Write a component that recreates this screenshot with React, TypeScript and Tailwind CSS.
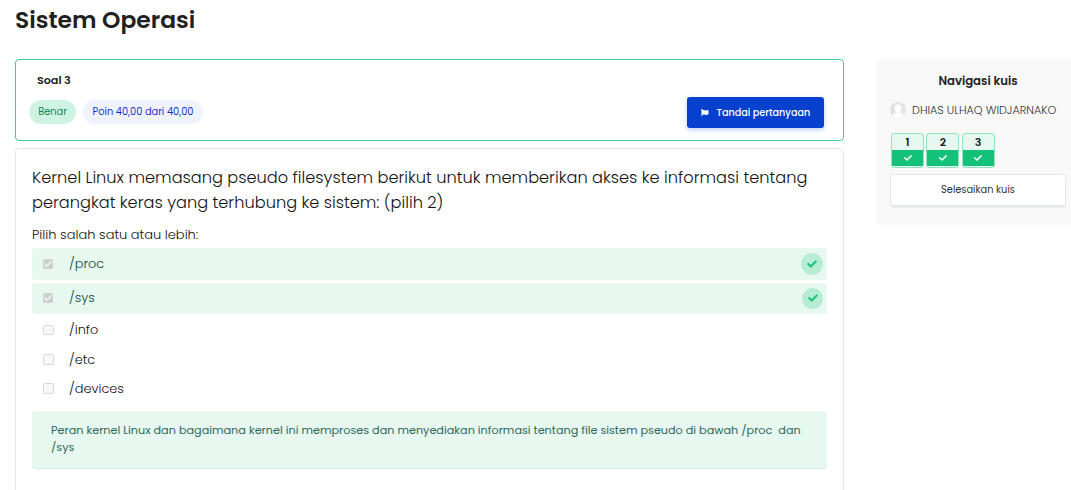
import { FaCheck, FaFlag } from "react-icons/fa";

const options = [
  { label: "/proc", correct: true, row: "h-8 mb-[3px]", badge: "size-[22px]" },
  { label: "/sys", correct: true, row: "h-[31px] mb-[1px] pb-px", badge: "size-[21px]" },
  { label: "/info", correct: false, row: "h-[30px]", badge: "" },
  { label: "/etc", correct: false, row: "h-[29px]", badge: "" },
  { label: "/devices", correct: false, row: "h-[29px]", badge: "" },
];

function Checkbox({ checked }: { checked: boolean }) {
  return checked ? (
    <span className="flex size-[10px] items-center justify-center rounded-[2px] bg-[#cbcfcd] text-[#f0f5f3]">
      <FaCheck size={8} />
    </span>
  ) : (
    <span className="size-[10.5px] rounded-[2px] border border-[#d9d9d9] bg-[#f8f8f8]" />
  );
}

function QuestionInfo() {
  return (
    <section className="flex h-[82px] justify-between rounded border border-[#3fce92] pl-[13px] pr-[19px]">
      <div>
        <h2 className="mt-[11px] pl-2 text-[11.2px] leading-[18px] font-semibold tracking-[-0.05px]">Soal 3</h2>
        <div className="mt-[11px] flex gap-[7px] text-[9.8px] leading-6">
          <span className="w-[47px] rounded-full bg-[#cff3e3] text-center text-[#198754]">Benar</span>
          <span className="w-[120px] rounded-full bg-[#eff3fe] text-center text-[#1233c8]">Poin 40,00 dari 40,00</span>
        </div>
      </div>
      <button className="mt-[37px] flex h-[31px] w-[137px] items-center rounded-[3px] bg-[#0540cf] pl-[14px] text-[9.65px] font-medium text-white shadow-[0_2px_5px_rgba(5,64,207,0.25)]">
        <FaFlag size={7.5} />
        <span className="ml-[8px] pt-px whitespace-nowrap">Tandai pertanyaan</span>
      </button>
    </section>
  );
}

function Question() {
  return (
    <section className="mt-[7px] h-[360px] rounded border border-[#e6e6e6] px-4 pt-4">
      <p className="whitespace-nowrap text-[16.21px] leading-[25px] font-light text-[#111]">
        Kernel Linux memasang pseudo filesystem berikut untuk memberikan akses ke informasi tentang
        <br />
        perangkat keras yang terhubung ke sistem: (pilih 2)
      </p>
      <p className="mt-[10px] h-[23px] text-[13px] leading-5 font-light text-[#111]">Pilih salah satu atau lebih:</p>
      <ul className="h-[163px]">
        {options.map((o) => (
          <li key={o.label} className={`${o.row} flex items-center rounded pl-[11px] pr-1 ${o.correct ? "bg-[#e7f8f0] text-[#0b4a34]" : "text-[#111]"}`}>
            <Checkbox checked={o.correct} />
            <span className="ml-auto flex w-[754px] items-center justify-between text-[12.9px] leading-5 font-light">
              {o.label}
              {o.correct && (
                <span className={`${o.badge} flex items-center justify-center rounded-full bg-[#b7ecd4] text-[#13c179]`}>
                  <FaCheck size={10} />
                </span>
              )}
            </span>
          </li>
        ))}
      </ul>
      <div className="h-[58px] whitespace-nowrap rounded border-b border-[#cff1e1] bg-[#e7f8f0] pt-[11px] pl-[19px] text-[11.22px] leading-[17px] text-[#31675a]">
        Peran kernel Linux dan bagaimana kernel ini memproses dan menyediakan informasi tentang file sistem pseudo di bawah /proc&nbsp; dan
        <br />
        /sys
      </div>
    </section>
  );
}

function QuizNavigation() {
  return (
    <aside className="h-[166px] w-[195px] shrink-0 rounded-l bg-[#f8f8f8] pt-[13px] pl-[14px]">
      <h2 className="w-[176px] text-center text-[11.7px] leading-[18px] font-semibold">Navigasi kuis</h2>
      <div className="mt-[12px] flex h-4 items-center gap-[6px]">
        <svg viewBox="0 0 16 16" className="size-4 shrink-0 rounded-full bg-[#e3e3e3]">
          <ellipse cx="8" cy="6.5" rx="3.4" ry="3.9" fill="#fff" />
          <path d="M2 16c0-3 1.500-4.500 4-5.500h4c2.500 1 4 2.500 4 5.500z" fill="#fff" />
        </svg>
        <span className="whitespace-nowrap text-[11.2px] font-light text-[#333]">DHIAS ULHAQ WIDJARNAKO</span>
      </div>
      <div className="mt-[15px] ml-px flex gap-[2.3px]">
        {[1, 2, 3].map((n) => (
          <div key={n} className="flex h-[35px] w-[33px] flex-col overflow-hidden rounded-[3px] border border-[#91e2be] bg-[#e7f8f0] pb-px">
            <span className="h-4 text-center text-[11px] leading-[17px] font-semibold">{n}</span>
            <span className="flex flex-1 items-center justify-center bg-[#13c179] text-white">
              <FaCheck size={8} />
            </span>
          </div>
        ))}
      </div>
      <button className="mt-[6px] block h-8 w-[176px] rounded-[3px] border border-[#e1e6ef] bg-white text-[9.8px] text-[#333] shadow-[0_2px_0_#e9ebef]">Selesaikan kuis</button>
    </aside>
  );
}

export default function App() {
  return (
    <div className="h-[490px] w-[1071px] overflow-hidden bg-white pl-[15px] font-['Poppins','Inter',sans-serif] text-[#212121]">
      <h1 className="h-[59px] pt-[3px] text-[23.4px] leading-[34px] font-semibold">Sistem Operasi</h1>
      <div className="flex items-start justify-between">
        <main className="w-[829px]">
          <QuestionInfo />
          <Question />
        </main>
        <QuizNavigation />
      </div>
    </div>
  );
}
